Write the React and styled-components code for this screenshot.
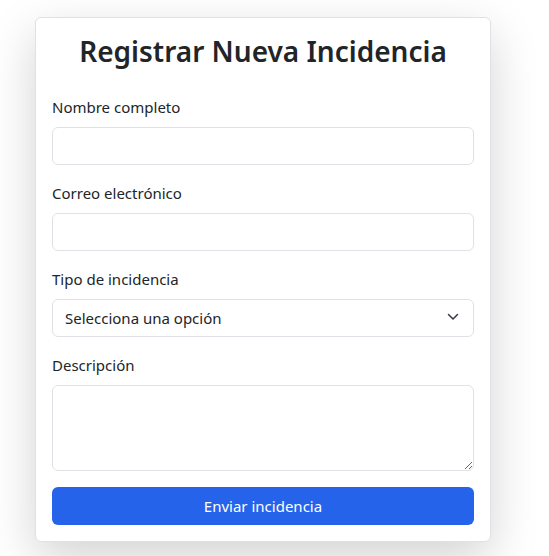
import React from 'react';
import styled, { createGlobalStyle } from 'styled-components';

const GlobalStyle = createGlobalStyle`
  * { box-sizing: border-box; }
  body {
    margin: 0;
    background: #ffffff;
    font-family: "Noto Sans", "Open Sans", sans-serif;
    color: #212529;
  }
`;

const Page = styled.div`
  padding: 17px 0 14px 35px;
`;

const Card = styled.form`
  width: 456px;
  background: #fff;
  border: 1px solid #dee2e6;
  border-radius: 6px;
  padding: 16px;
  box-shadow: 0 1rem 3rem rgba(0, 0, 0, 0.175);
`;

const Title = styled.h2`
  margin: 0 0 27px;
  text-align: center;
  font-size: 28px;
  font-weight: 600;
  line-height: 34px;
  color: #212529;
`;

const Field = styled.div`
  margin-bottom: 16px;
`;

const Label = styled.label`
  display: block;
  font-size: 15px;
  line-height: 24px;
  margin-bottom: 8px;
`;

const Input = styled.input`
  display: block;
  width: 100%;
  height: 38px;
  padding: 6px 12px;
  font: inherit;
  font-size: 15px;
  border: 1px solid #dee2e6;
  border-radius: 6px;
  color: #212529;
  outline: none;
`;

const SelectWrap = styled.div`
  position: relative;
`;

const Select = styled.select`
  appearance: none;
  display: block;
  width: 100%;
  height: 38px;
  padding: 6px 36px 6px 12px;
  font: inherit;
  font-size: 15px;
  border: 1px solid #dee2e6;
  border-radius: 6px;
  background: #fff;
  color: #212529;
  outline: none;
`;

const Chevron = styled.svg`
  position: absolute;
  right: 15px;
  top: 12px;
  width: 12px;
  height: 12px;
  pointer-events: none;
`;

const TextArea = styled.textarea`
  display: block;
  width: 100%;
  height: 86px;
  padding: 6px 12px;
  font: inherit;
  border: 1px solid #dee2e6;
  border-radius: 6px;
  resize: vertical;
  outline: none;
`;

const Button = styled.button`
  display: block;
  width: 100%;
  height: 38px;
  border: none;
  border-radius: 6px;
  background: #2563eb;
  color: #fff;
  font: inherit;
  font-size: 15px;
  cursor: pointer;
`;

export default function App() {
  return (
    <Page>
      <GlobalStyle />
      <Card onSubmit={(e) => e.preventDefault()}>
        <Title>Registrar Nueva Incidencia</Title>
        <Field>
          <Label>Nombre completo</Label>
          <Input type="text" />
        </Field>
        <Field>
          <Label>Correo electrónico</Label>
          <Input type="email" />
        </Field>
        <Field>
          <Label>Tipo de incidencia</Label>
          <SelectWrap>
            <Select defaultValue="">
              <option value="">Selecciona una opción</option>
            </Select>
            <Chevron viewBox="0 0 12 12">
              <path d="M1.5 3.5l4.5 4.5 4.5-4.5" fill="none" stroke="#343a40" strokeWidth="1.5" strokeLinecap="round" strokeLinejoin="round" />
            </Chevron>
          </SelectWrap>
        </Field>
        <Field>
          <Label>Descripción</Label>
          <TextArea />
        </Field>
        <Button type="submit">Enviar incidencia</Button>
      </Card>
    </Page>
  );
}
